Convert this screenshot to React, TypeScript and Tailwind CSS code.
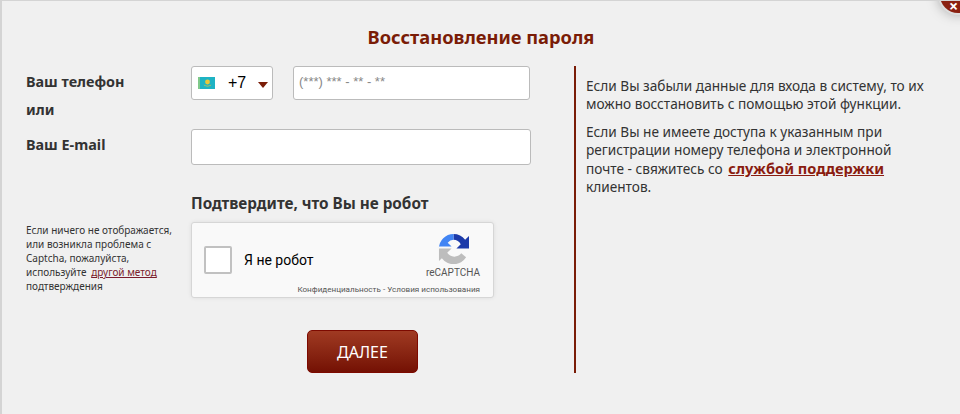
export default function App() {
  const f = "font-['Noto_Sans','DejaVu_Sans',sans-serif]";
  return (
    <div className={`relative w-[960px] h-[414px] overflow-hidden bg-[#f0f0f0] border-t border-l-2 border-[#d4d4d4] ${f} text-[#333]`}>
      <div className="absolute top-[-24px] right-[-16px] w-[36px] h-[36px] rounded-full bg-[#8a2010] ring-2 ring-[#ddd] shadow-[0_0_14px_rgba(0,0,0,0.4)] flex items-end pl-[9px] text-white text-[16px] font-bold leading-[14px]">×</div>
      <h1 className="h-[65px] pt-[23px] text-center text-[18.3px] leading-[25px] font-bold text-[#7a1c07]">Восстановление пароля</h1>
      <div className="flex pl-[24px]">
        <div className="w-[550px] h-[307px] border-r-2 border-[#7a1c07]">
          <div className="flex">
            <div className="w-[165px] shrink-0">
              <div className="text-[14.4px] font-bold leading-[20px] pt-[6px]">Ваш телефон</div>
              <div className="text-[14.4px] font-bold leading-[20px] mt-[8px]">или</div>
              <div className="text-[14.4px] font-bold leading-[20px] mt-[15px]">Ваш E-mail</div>
            </div>
            <div>
              <div className="flex gap-[20px]">
                <div className="w-[82px] h-[34px] bg-white border border-[#bbb] rounded-[3px] flex items-center pl-[6px] pr-[4px] font-['Liberation_Sans',sans-serif]">
                  <svg width="17" height="12" viewBox="0 0 17 12" className="shrink-0">
                    <rect width="17" height="12" fill="#1eb3c4" />
                    <rect width="2" height="12" fill="#7fc98a" />
                    <circle cx="9.5" cy="5" r="2.4" fill="#e9c83a" />
                    <path d="M5.5 7.5 Q9.5 10 13.5 7.5 L12.5 8.8 Q9.5 10 6.5 8.8Z" fill="#d9c43f" />
                  </svg>
                  <span className="ml-[13px] text-[16px] leading-[20px] text-black">+7</span>
                  <span className="ml-auto mt-[3px] w-0 h-0 border-x-[5px] border-x-transparent border-t-[6px] border-t-[#7a1c07]" />
                </div>
                <div className="w-[237px] h-[34px] bg-white border border-[#bbb] rounded-[3px] pl-[5px] pt-[6px] font-['Liberation_Sans',sans-serif] text-[13px] leading-[18px] text-[#888]">(***) *** - ** - **</div>
              </div>
              <div className="mt-[29px] w-[340px] h-[36px] bg-white border border-[#bbb] rounded-[3px]" />
            </div>
          </div>
          <div className="flex mt-[28px]">
            <div className="w-[165px] shrink-0 pt-[30px] text-[10px] leading-[14px]">
              <div>Если ничего не отображается,</div>
              <div>или возникла проблема с</div>
              <div>Captcha, пожалуйста,</div>
              <div>используйте <span className="ml-[2px] text-[#7a1c2c] underline">другой метод</span></div>
              <div>подтверждения</div>
            </div>
            <div>
              <div className="text-[15.3px] font-bold leading-[20px] text-[#333] whitespace-nowrap">Подтвердите, что Вы не робот</div>
              <div className="mt-[9px] relative w-[303px] h-[76px] bg-[#f9f9f9] border border-[#d6d6d6] rounded-[3px] shadow-[0_0_4px_rgba(0,0,0,0.08)] flex items-center font-['Roboto',sans-serif]">
                <div className="ml-[12px] w-[28px] h-[28px] bg-white border-2 border-[#c1c1c1] rounded-[2px]" />
                <span className="ml-[12px] text-[14px] text-black leading-[20px]">Я не робот</span>
                <div className="absolute right-[13px] top-[10px] flex flex-col items-end">
                  <svg width="31" height="31" viewBox="0 0 32 32" className="mr-[11px]">
                    <path d="M16 1 A15 15 0 0 1 28 7 L32 3 V16 H19 L23.5 11.5 A9 9 0 0 0 16 7Z" fill="#1c3aa9" />
                    <path d="M1 16 A15 15 0 0 1 16 1 V7 A9 9 0 0 0 10 10 L14 14 H1Z" fill="#4285f4" />
                    <path d="M1 16 H14 L9.5 20.5 A9 9 0 0 0 24 21 L29 25 A15 15 0 0 1 4 26 L1 29Z" fill="#bdbdbd" />
                  </svg>
                  <div className="mt-[3px] text-[10px] leading-[12px] text-[#555]">reCAPTCHA</div>
                  <div className="absolute top-[51px] right-0 whitespace-nowrap text-[8.1px] leading-[10px] text-[#555]">Конфиденциальность - Условия использования</div>
                </div>
              </div>
            </div>
          </div>
          <div className="mt-[32px] ml-[281px] w-[111px] h-[43px] rounded-[5px] border border-[#7d0a00] bg-gradient-to-b from-[#a03a22] to-[#741004] flex items-center justify-center text-white text-[16px]">ДАЛЕЕ</div>
        </div>
        <div className="pl-[10px] w-[350px] text-[13.65px] leading-[18px] text-[#333]">
          <p className="mt-[11px]">Если Вы забыли данные для входа в систему, то их можно восстановить с помощью этой функции.</p>
          <p className="mt-[10px]">Если Вы не имеете доступа к указанным при регистрации номеру телефона и электронной почте - свяжитесь со <a className="ml-[2px] font-bold underline text-[#8a1c10] text-[14.6px] leading-[18px]">службой поддержки</a> клиентов.</p>
        </div>
      </div>
    </div>
  );
}
